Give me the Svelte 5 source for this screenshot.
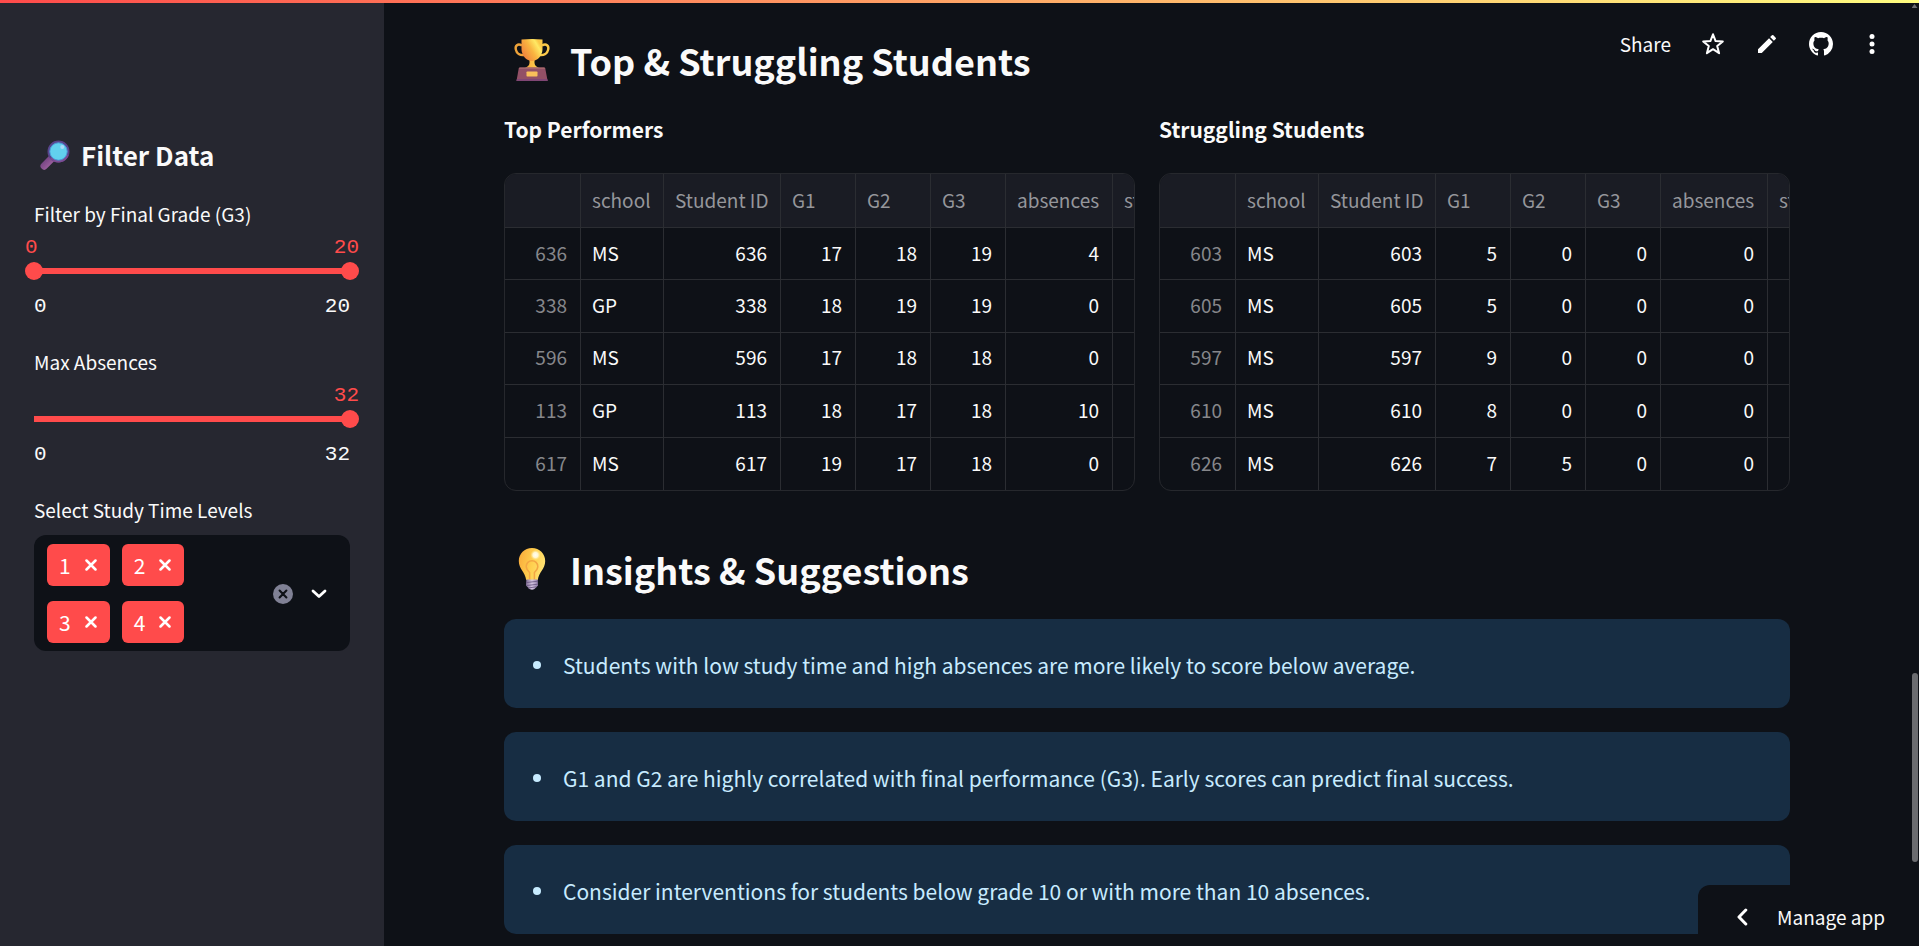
<script>
  const columns = ['school', 'Student ID', 'G1', 'G2', 'G3', 'absences', 'studytime'];
  const tables = [
    {
      title: 'Top Performers',
      rows: [
        ['MS', 636, 17, 18, 19, 4],
        ['GP', 338, 18, 19, 19, 0],
        ['MS', 596, 17, 18, 18, 0],
        ['GP', 113, 18, 17, 18, 10],
        ['MS', 617, 19, 17, 18, 0],
      ],
    },
    {
      title: 'Struggling Students',
      rows: [
        ['MS', 603, 5, 0, 0, 0],
        ['MS', 605, 5, 0, 0, 0],
        ['MS', 597, 9, 0, 0, 0],
        ['MS', 610, 8, 0, 0, 0],
        ['MS', 626, 7, 5, 0, 0],
      ],
    },
  ];
  const insights = [
    'Students with low study time and high absences are more likely to score below average.',
    'G1 and G2 are highly correlated with final performance (G3). Early scores can predict final success.',
    'Consider interventions for students below grade 10 or with more than 10 absences.',
  ];

  let gradeMin = $state(0);
  let gradeMax = $state(20);
  let absences = $state(32);
  let levels = $state([1, 2, 3, 4]);
</script>

<div class="app">
  <div class="decoration"></div>

  <aside class="sidebar">
    <h3>
      <svg class="lens" viewBox="0 0 30 30" aria-hidden="true">
        <defs>
          <linearGradient id="handle" x1="0" y1="0" x2="1" y2="1">
            <stop offset="0" stop-color="#6d3f7d" />
            <stop offset="1" stop-color="#a365a3" />
          </linearGradient>
        </defs>
        <path d="M4.2 26 13 17.2" stroke="url(#handle)" stroke-width="7.4" stroke-linecap="round" />
        <circle cx="18.5" cy="11.5" r="9.9" fill="#62d0ee" stroke="#59448c" stroke-width="2.2" />
        <path d="M11 18a9.9 9.9 0 0 0 16.6-3" fill="none" stroke="#7d4b91" stroke-width="2.2" />
        <circle cx="18.5" cy="11.5" r="8.7" fill="none" stroke="#4b9bd8" stroke-width="1" />
        <circle cx="22.3" cy="7" r="2" fill="#a9d9f8" />
      </svg>
      Filter Data
    </h3>

    <div class="field">
      <label for="grade-min">Filter by Final Grade (G3)</label>
      <div class="slider">
        <div class="values"><output>{gradeMin}</output><output>{gradeMax}</output></div>
        <div class="rail">
          <input id="grade-min" type="range" min="0" max="20" bind:value={gradeMin} />
          <input type="range" min="0" max="20" aria-label="Maximum final grade" bind:value={gradeMax} />
        </div>
      </div>
      <div class="bounds"><span>0</span><span>20</span></div>
    </div>

    <div class="field">
      <label for="absences">Max Absences</label>
      <div class="slider">
        <div class="values end"><output>{absences}</output></div>
        <div class="rail">
          <input id="absences" type="range" min="0" max="32" bind:value={absences} />
        </div>
      </div>
      <div class="bounds"><span>0</span><span>32</span></div>
    </div>

    <div class="field">
      <label for="levels">Select Study Time Levels</label>
      <div class="select">
        <div class="tags">
          {#each levels as level (level)}
            <span class="tag">
              {level}
              <button aria-label="Remove {level}" onclick={() => (levels = levels.filter((l) => l !== level))}>
                <svg width="12" height="12" viewBox="0 0 12 12"><path d="M1.500 1.500 10.500 10.500M10.500 1.500 1.500 10.500" fill="none" stroke="#fff" stroke-width="2.500" stroke-linecap="round" /></svg>
              </button>
            </span>
          {/each}
          <input id="levels" type="text" autocomplete="off" />
        </div>
        <div class="actions">
          <button aria-label="Clear all" onclick={() => (levels = [])}>
            <svg width="20" height="20" viewBox="0 0 20 20"><circle cx="10" cy="10" r="10" fill="#808195" /><path d="M6.6 6.6 13.4 13.4M13.4 6.6 6.6 13.4" fill="none" stroke="#0e1117" stroke-width="2.1" stroke-linecap="round" /></svg>
          </button>
          <button aria-label="Open list">
            <svg width="16" height="10" viewBox="0 0 16 10"><path d="M2 2 8 7.6 14 2" fill="none" stroke="#fff" stroke-width="2.8" stroke-linecap="round" stroke-linejoin="round" /></svg>
          </button>
        </div>
      </div>
    </div>
  </aside>

  <main>
    <section>
      <h2>
        <svg class="emoji" viewBox="0 0 42 42" aria-hidden="true">
          <defs>
            <linearGradient id="cup" x1="0" y1="0.6" x2="0.8" y2="0.1">
              <stop offset="0" stop-color="#f0843d" />
              <stop offset="0.5" stop-color="#f9b540" />
              <stop offset="0.85" stop-color="#ffe964" />
              <stop offset="1" stop-color="#fbc846" />
            </linearGradient>
            <linearGradient id="stem" x1="0" x2="1">
              <stop offset="0" stop-color="#f6a63c" />
              <stop offset="1" stop-color="#ffd54f" />
            </linearGradient>
          </defs>
          <path d="M11 6.5C6.500 4 4 7 4.800 10.500C5.600 14.500 9 16.500 13 16" fill="none" stroke="#eea33a" stroke-width="2.4" />
          <path d="M31 6.500C35.500 4 38 7 37.200 10.500C36.400 14.500 33 16.500 29 16" fill="none" stroke="#fbc94a" stroke-width="2.4" />
          <path d="M18.500 20h5v4c.2 2.500 2 3.800 4.500 5H14c2.500-1.200 4.300-2.500 4.500-5z" fill="url(#stem)" />
          <path d="M10.500.5q10.500-1 21 0v9.500c0 6.500-5 12-10.500 12s-10.500-5.500-10.500-12z" fill="url(#cup)" />
          <path d="M9 28.500h24a1.500 1.500 0 0 1 1.300 1l2.300 12.500H5.500l2.200-12.500a1.500 1.500 0 0 1 1.300-1z" fill="#925066" />
          <path d="M8.500 28.500h25l.5 1.600h-26z" fill="#a5666b" />
          <path d="M5.800 40h30.500l.4 2H5.500z" fill="#7f4674" />
          <rect x="15.500" y="32.500" width="11" height="5" rx="0.800" fill="#f9c05a" />
        </svg>
        Top &amp; Struggling Students
      </h2>
      <div class="pair">
        {#each tables as table}
          <div class="column">
            <h4>{table.title}</h4>
            <div class="frame">
              <table aria-label={table.title}>
                <colgroup>
                  <col class="c-index" /><col class="c-school" /><col class="c-id" />
                  <col class="c-grade" /><col class="c-grade" /><col class="c-grade" />
                  <col class="c-absences" /><col class="c-study" />
                </colgroup>
                <thead>
                  <tr>
                    <td></td>
                    {#each columns as column}<th scope="col">{column}</th>{/each}
                  </tr>
                </thead>
                <tbody>
                  {#each table.rows as row}
                    <tr>
                      <th scope="row">{row[1]}</th>
                      {#each row as cell}<td class:text={typeof cell === 'string'}>{cell}</td>{/each}
                      <td></td>
                    </tr>
                  {/each}
                </tbody>
              </table>
            </div>
          </div>
        {/each}
      </div>
    </section>

    <section>
      <h2>
        <svg class="emoji" viewBox="0 0 42 42" aria-hidden="true">
          <defs>
            <linearGradient id="glass" x1="0" y1="0.2" x2="1" y2="0.5">
              <stop offset="0" stop-color="#f9ab3b" />
              <stop offset="0.55" stop-color="#ffd04f" />
              <stop offset="1" stop-color="#ffe273" />
            </linearGradient>
            <radialGradient id="shine">
              <stop offset="0" stop-color="#fffdf2" />
              <stop offset="0.5" stop-color="#fff6d0" />
              <stop offset="1" stop-color="#ffe889" stop-opacity="0" />
            </radialGradient>
            <linearGradient id="screw" x1="0" x2="1">
              <stop offset="0" stop-color="#7e6d92" />
              <stop offset="0.5" stop-color="#d6c6e2" />
              <stop offset="1" stop-color="#8c78a4" />
            </linearGradient>
          </defs>
          <path d="M21 0C13.500 0 7.800 5.800 7.800 13c0 8 6.400 11 7.400 19h11.600c1-8 7.400-11 7.400-19C34.200 5.800 28.500 0 21 0z" fill="url(#glass)" />
          <path d="M18.600 31.500V24.500C16.500 22.500 15.200 20.500 15.200 18.500a5.800 5.800 0 0 1 11.600 0c0 2-1.300 4-3.400 6v7" fill="none" stroke="#f3a644" stroke-width="1.500" />
          <ellipse cx="24.500" cy="7" rx="5.200" ry="5.200" fill="url(#shine)" />
          <path d="M15.300 31.500h11.400l.3 6-3.500 3.500q-2.500 1.500-5 0L15 37.500z" fill="url(#screw)" />
          <path d="M15 34.600 27 33.200M15 37.600 27 36.200M17 40 25.500 38.800" stroke="#6e5b87" stroke-width="0.900" />
        </svg>
        Insights &amp; Suggestions
      </h2>
      <div class="alerts">
        {#each insights as insight}
          <div class="alert" role="note">
            <ul><li>{insight}</li></ul>
          </div>
        {/each}
      </div>
    </section>
  </main>

  <div class="scrollbar" aria-hidden="true">
    <span class="arrow"></span>
    <span class="thumb"></span>
  </div>

  <header class="toolbar">
    <button>Share</button>
    <button aria-label="Favorite">
      <svg width="24" height="24" viewBox="0 0 24 24"><path d="M12 2.300 14.600 9.100 21.800 9.500 16.200 14.100 18.100 21.200 12 17.200 5.900 21.200 7.800 14.100 2.200 9.500 9.400 9.100z" fill="none" stroke="#fff" stroke-width="2" stroke-linejoin="round" /></svg>
    </button>
    <button aria-label="Edit source">
      <svg width="24" height="24" viewBox="0 0 24 24"><path fill="#fff" d="M3 17.250V21h3.750L17.810 9.940l-3.750-3.750L3 17.250zM20.710 7.040a1 1 0 0 0 0-1.410l-2.340-2.340a1 1 0 0 0-1.410 0l-1.830 1.830 3.750 3.750 1.830-1.830z" /></svg>
    </button>
    <a href="#source" aria-label="View on GitHub">
      <svg width="24" height="24" viewBox="0 0 16 16"><path fill="#fff" d="M8 0C3.580 0 0 3.580 0 8c0 3.540 2.290 6.530 5.470 7.590.4.070.55-.17.55-.38 0-.19-.01-.82-.01-1.490-2.010.37-2.530-.49-2.690-.94-.09-.23-.48-.94-.82-1.130-.28-.15-.68-.52-.01-.53.63-.01 1.080.58 1.230.82.720 1.210 1.870.87 2.330.66.070-.52.280-.87.510-1.070-1.780-.2-3.640-.89-3.640-3.950 0-.87.310-1.590.82-2.150-.08-.2-.36-1.020.08-2.120 0 0 .67-.21 2.200.82.640-.18 1.320-.27 2-.27s1.360.09 2 .27c1.530-1.040 2.200-.82 2.200-.82.440 1.100.160 1.920.080 2.120.51.560.82 1.270.82 2.150 0 3.070-1.870 3.750-3.650 3.950.29.25.54.73.54 1.480 0 1.070-.01 1.930-.01 2.200 0 .21.150.46.550.38A8.010 8.010 0 0 0 16 8c0-4.420-3.580-8-8-8z" /></svg>
    </a>
    <button class="kebab" aria-label="Main menu">
      <svg width="18" height="24" viewBox="3 0 18 24" fill="#fff"><circle cx="12" cy="4.500" r="2.500" /><circle cx="12" cy="12" r="2.500" /><circle cx="12" cy="19.500" r="2.500" /></svg>
    </button>
  </header>

  <button class="manage">
    <svg width="12" height="18" viewBox="0 0 12 18"><path d="M9.800 2 3 9 9.800 16" fill="none" stroke="#fff" stroke-width="3" stroke-linecap="round" stroke-linejoin="round" /></svg>
    Manage app
  </button>
</div>

<style>
  :global(body) {
    margin: 0;
    background: #0e1117;
  }
  .app {
    position: relative;
    display: flex;
    height: 100vh;
    overflow: hidden;
    background: #0e1117;
    color: #fafafa;
    font-family: 'Noto Sans CJK SC', 'Noto Sans', sans-serif;
    font-size: 19px;
    line-height: 32px;
  }
  h2, h3, h4, ul {
    margin: 0;
    padding: 0;
  }
  button {
    display: flex;
    align-items: center;
    justify-content: center;
    padding: 0;
    border: 0;
    background: none;
    color: inherit;
    font: inherit;
    cursor: pointer;
  }
  svg {
    display: block;
    flex: none;
  }
  .decoration {
    position: absolute;
    inset: 0 0 auto;
    z-index: 2;
    height: 3px;
    background: linear-gradient(90deg, #ff4b4b, #fffd80);
  }

  .sidebar {
    box-sizing: border-box;
    flex: none;
    width: 384px;
    padding: 137px 34px 0;
    background: #262730;
  }
  h3 {
    display: flex;
    align-items: center;
    gap: 11px;
    padding-left: 6px;
    margin-bottom: 24px;
    font-size: 26px;
    line-height: 36px;
    font-weight: 600;
  }
  .lens {
    width: 30px;
    height: 30px;
  }
  .field {
    margin-bottom: 24px;
  }
  .field label {
    display: block;
    margin-bottom: 2px;
    line-height: 34px;
  }
  .slider {
    margin: 0 -9px;
  }
  .values, .bounds {
    display: flex;
    justify-content: space-between;
    font-family: 'Liberation Mono', monospace;
    font-size: 21px;
    line-height: 29px;
  }
  .values {
    color: #ff4b4b;
  }
  .values.end {
    justify-content: flex-end;
  }
  .bounds {
    padding-top: 12px;
  }
  .rail {
    display: grid;
    align-items: center;
    height: 18px;
    background: linear-gradient(#ff4b4b, #ff4b4b) center / calc(100% - 18px) 6px no-repeat;
  }
  .rail input {
    grid-area: 1 / 1;
    width: 100%;
    height: 18px;
    margin: 0;
    appearance: none;
    background: none;
    pointer-events: none;
  }
  .rail input::-webkit-slider-thumb {
    appearance: none;
    width: 18px;
    height: 18px;
    border: 0;
    border-radius: 50%;
    background: #ff4b4b;
    pointer-events: auto;
  }
  .select {
    display: flex;
    align-items: center;
    margin-top: 8px;
    padding: 9px 23px 8px 13px;
    border-radius: 12px;
    background: #0e1117;
  }
  .tags {
    display: flex;
    flex: 1;
    flex-wrap: wrap;
    gap: 15px 12px;
  }
  .tag {
    display: flex;
    align-items: center;
    gap: 14px;
    height: 42px;
    padding: 0 13px 0 12px;
    border-radius: 6px;
    background: #ff4b4b;
    color: #fff;
    font-size: 21px;
  }
  .tags input {
    width: 24px;
    padding: 0;
    border: 0;
    outline: 0;
    background: none;
    color: inherit;
    font: inherit;
  }
  .actions {
    display: flex;
    gap: 18px;
    padding-left: 24px;
  }

  main {
    display: flex;
    flex: 1;
    flex-direction: column;
    gap: 48px;
    min-width: 0;
    padding: 30px 120px 0;
  }
  h2 {
    display: flex;
    align-items: center;
    gap: 17px;
    padding-left: 7px;
    font-size: 36px;
    line-height: 60px;
    font-weight: 600;
  }
  .emoji {
    width: 42px;
    height: 42px;
  }
  .pair {
    display: grid;
    grid-template-columns: 1fr 1fr;
    gap: 24px;
    padding-top: 21px;
  }
  .column {
    min-width: 0;
  }
  h4 {
    margin-bottom: 26px;
    font-size: 21px;
    line-height: 36px;
    font-weight: 600;
  }
  .frame {
    overflow: hidden;
    border: 1px solid #26282d;
    border-radius: 12px;
  }
  table {
    width: 100%;
    min-width: 680px;
    height: 316px;
    border-collapse: separate;
    border-spacing: 0;
    table-layout: fixed;
  }
  .c-index { width: 76px; }
  .c-school { width: 83px; }
  .c-id { width: 117px; }
  .c-grade { width: 75px; }
  .c-absences { width: 107px; }
  th, td {
    box-sizing: border-box;
    height: 52px;
    padding: 0 13px 2px 11px;
    border-right: 1px solid #2b2d32;
    border-bottom: 1px solid #2b2d32;
    font-weight: 400;
    text-align: right;
    line-height: 28px;
  }
  thead th, thead td {
    height: 54px;
    background: #1a1c24;
    color: #95969b;
    text-align: left;
    white-space: nowrap;
  }
  thead th {
    padding-right: 0;
  }
  tbody th {
    color: #86878b;
  }
  td.text {
    text-align: left;
  }
  tbody tr:last-child > * {
    border-bottom: 0;
  }

  .alerts {
    display: flex;
    flex-direction: column;
    gap: 24px;
    padding-top: 20px;
  }
  .alert {
    padding: 28px 24px 25px 29px;
    border-radius: 12px;
    background: #172d43;
    color: #c7ebff;
    font-size: 21px;
    line-height: 36px;
  }
  .alert li {
    display: flex;
    align-items: center;
    gap: 22px;
  }
  .alert li::before {
    content: '';
    flex: none;
    width: 8px;
    height: 8px;
    border-radius: 50%;
    background: currentColor;
  }

  .scrollbar {
    display: flex;
    flex: none;
    flex-direction: column;
    align-items: center;
    width: 9px;
  }
  .scrollbar::after {
    content: '';
    flex: 1;
  }
  .arrow {
    box-sizing: border-box;
    flex: 8;
    width: 6px;
    margin-top: 4px;
    background: #6b6c70;
    clip-path: polygon(3px 0, 6px 4px, 0 4px);
  }
  .thumb {
    width: 6px;
    height: 20%;
    border-radius: 3px;
    background: #6b6c70;
  }

  .toolbar {
    position: absolute;
    top: 28px;
    right: 38px;
    display: flex;
    align-items: center;
    gap: 30px;
  }
  .manage {
    position: absolute;
    right: 0;
    bottom: 0;
    gap: 29px;
    height: 61px;
    padding: 3px 34px 0 38px;
    border-radius: 12px 0 0;
    background: #0e1117;
  }
</style>
